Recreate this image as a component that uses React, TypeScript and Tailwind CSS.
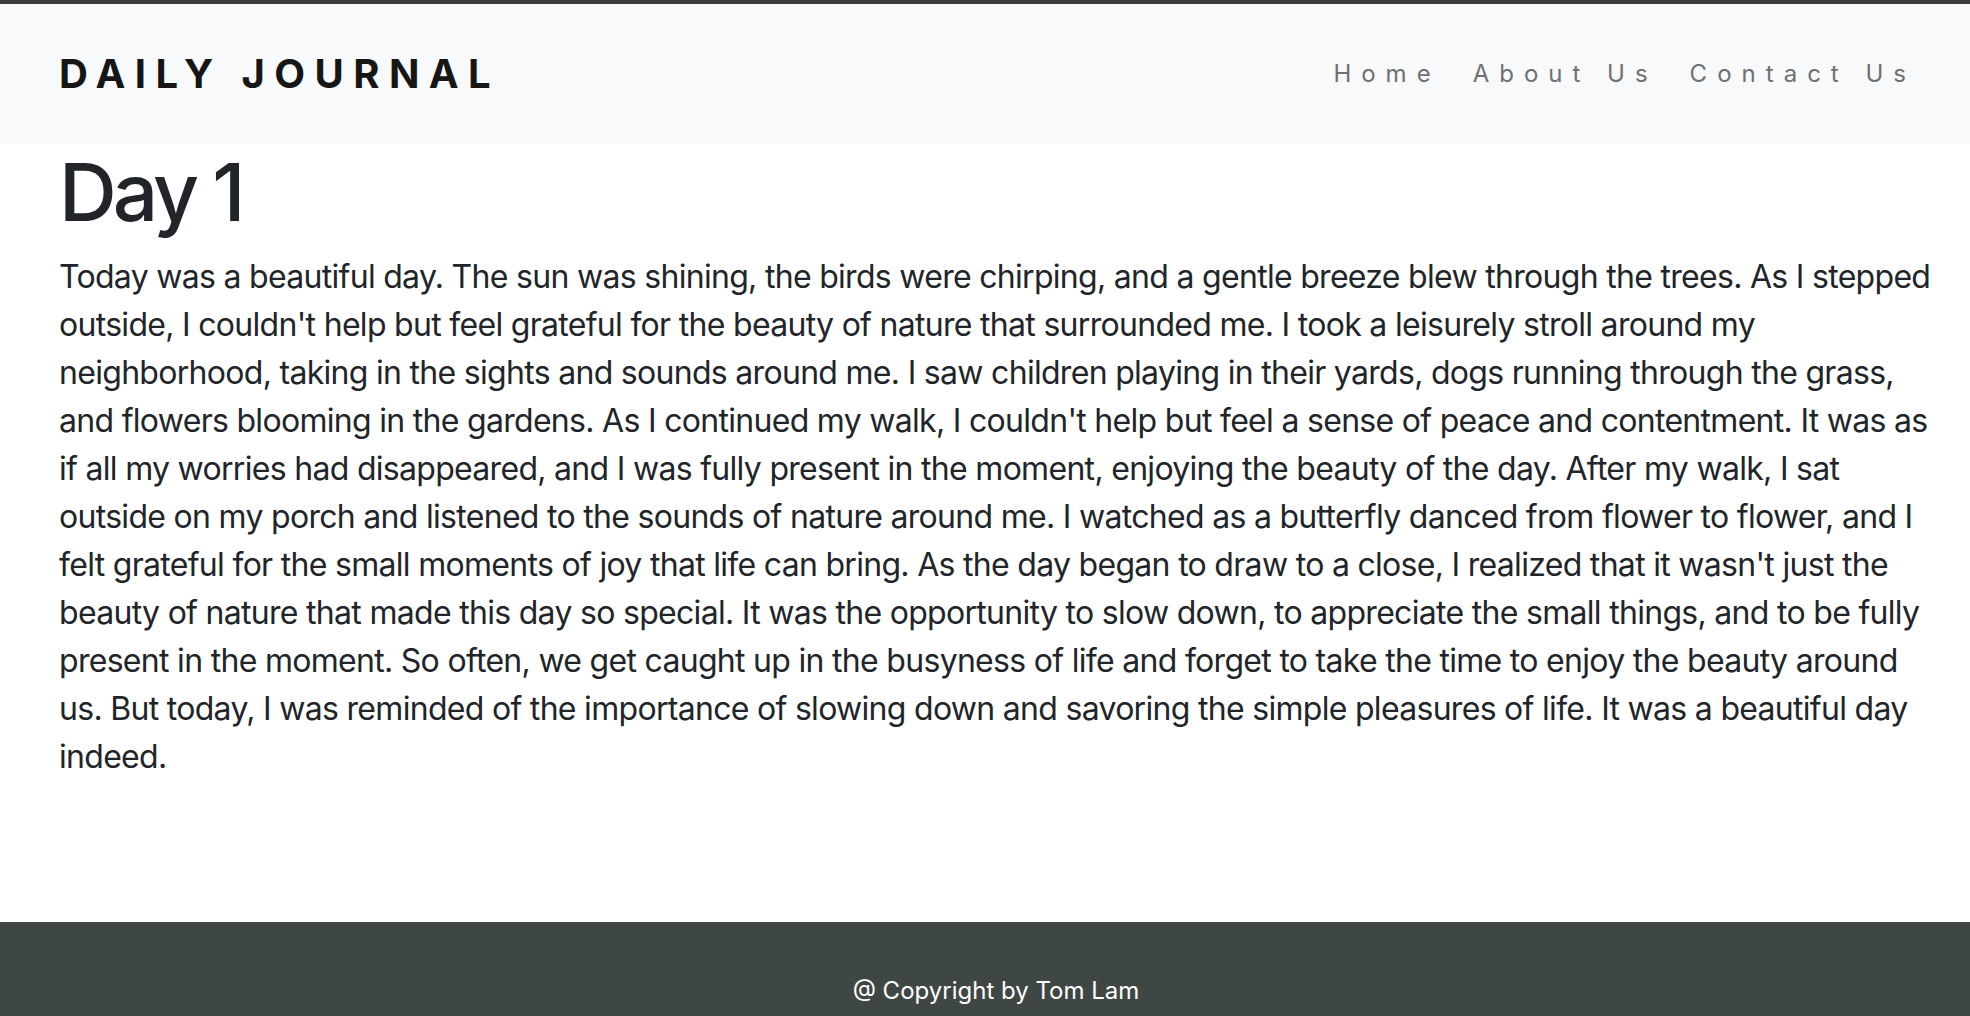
import React from 'react';

const ENTRY =
    "Today was a beautiful day. The sun was shining, the birds were chirping, and a gentle breeze blew through the trees. As I stepped outside, I couldn't help but feel grateful for the beauty of nature that surrounded me. I took a leisurely stroll around my neighborhood, taking in the sights and sounds around me. I saw children playing in their yards, dogs running through the grass, and flowers blooming in the gardens. As I continued my walk, I couldn't help but feel a sense of peace and contentment. It was as if all my worries had disappeared, and I was fully present in the moment, enjoying the beauty of the day. After my walk, I sat outside on my porch and listened to the sounds of nature around me. I watched as a butterfly danced from flower to flower, and I felt grateful for the small moments of joy that life can bring. As the day began to draw to a close, I realized that it wasn't just the beauty of nature that made this day so special. It was the opportunity to slow down, to appreciate the small things, and to be fully present in the moment. So often, we get caught up in the busyness of life and forget to take the time to enjoy the beauty around us. But today, I was reminded of the importance of slowing down and savoring the simple pleasures of life. It was a beautiful day indeed.";

const links = ['Home', 'About Us', 'Contact Us'];

export default function App() {
    return (
        <div className="min-h-screen bg-white font-['Inter',sans-serif] text-[#212529] border-t-4 border-[#3c3c3e]">
            <nav className="h-[140px] bg-[#f8f9fa] flex items-center justify-between pl-[59px] pr-[38px]">
                <a className="text-[40px] leading-[60px] font-bold tracking-[9.4px] text-[#161616]">DAILY JOURNAL</a>
                <ul className="flex items-center">
                    {links.map((l) => (
                        <li key={l}>
                            <a className="block px-4 text-[24px] leading-[36px] tracking-[10px] text-[#6f7072]">{l}</a>
                        </li>
                    ))}
                </ul>
            </nav>
            <main className="pl-[59px] pr-[32px] h-[778px]">
                <h1 className="text-[80px] leading-[96px] font-medium tracking-[-4px] mb-[13px]">Day 1</h1>
                <p className="text-[32px] leading-[48px] tracking-[-0.7px]">{ENTRY}</p>
            </main>
            <footer className="bg-[#3e4744] pt-[51px] pb-[48px] pl-[22px] text-center">
                <p className="text-[24px] leading-[36px] text-white">@ Copyright by Tom Lam</p>
            </footer>
        </div>
    );
}
